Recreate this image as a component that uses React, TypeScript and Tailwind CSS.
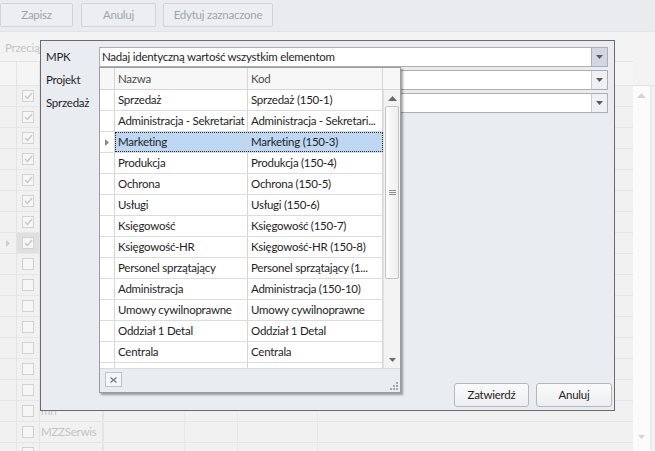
import React from "react";

const items: [string, string][] = [
  ["Sprzedaż", "Sprzedaż (150-1)"],
  ["Administracja - Sekretariat", "Administracja - Sekretari..."],
  ["Marketing", "Marketing (150-3)"],
  ["Produkcja", "Produkcja (150-4)"],
  ["Ochrona", "Ochrona (150-5)"],
  ["Usługi", "Usługi (150-6)"],
  ["Księgowość", "Księgowość (150-7)"],
  ["Księgowość-HR", "Księgowość-HR (150-8)"],
  ["Personel sprzątający", "Personel sprzątający (1..."],
  ["Administracja", "Administracja (150-10)"],
  ["Umowy cywilnoprawne", "Umowy cywilnoprawne"],
  ["Oddział 1 Detal", "Oddział 1 Detal"],
  ["Centrala", "Centrala"],
  ["Oddział 2", "Oddział 2"],
];

const bgRows = Array.from({ length: 18 }, (_, i) => ({
  checked: i < 8,
  selected: i === 7,
  name: i === 15 ? "mn" : i === 16 ? "MZZSerwis" : "",
}));

function DownArrow({ color = "#5b5b5b" }: { color?: string }) {
  return (
    <svg width="7" height="4" viewBox="0 0 7 4">
      <path d="M0 0h7L3.5 4z" fill={color} />
    </svg>
  );
}

function UpArrow({ color = "#5b5b5b" }: { color?: string }) {
  return (
    <svg width="9" height="5" viewBox="0 0 9 5">
      <path d="M0 5h9L4.5 0z" fill={color} />
    </svg>
  );
}

function FadedCheck({ checked }: { checked: boolean }) {
  return (
    <span className="w-[12px] h-[12px] border border-[#d2d2d2] bg-[#f6f6f6] flex items-center justify-center">
      {checked && (
        <svg width="9" height="8" viewBox="0 0 9 8">
          <path d="M1 4l2.5 2.5L8 1" stroke="#c8c8c8" strokeWidth="1.4" fill="none" />
        </svg>
      )}
    </span>
  );
}

function Combo({ text, active }: { text?: string; active?: boolean }) {
  return (
    <div className="w-[509px] h-[20px] flex border border-[#abafb5] bg-white">
      <div className="flex-1 pl-[2px] leading-[18px] text-[#1e1e1e] whitespace-nowrap overflow-hidden">{text}</div>
      <div
        className={
          active
            ? "w-[16px] flex items-center justify-center bg-[#d3d7e4] border-l border-[#abafbd]"
            : "w-[16px] flex items-center justify-center bg-[#eef0f3] border-l border-[#c9ccd1]"
        }
      >
        <DownArrow />
      </div>
    </div>
  );
}

export default function App() {
  return (
    <div className="relative w-[655px] h-[451px] overflow-hidden bg-[#f1f1f1] text-[11.5px] tracking-[-0.25px] font-['Segoe_UI',Lato,sans-serif]">
      {/* toolbar */}
      <div className="h-[32px] bg-[#e9ebee] flex items-start pt-[3px] gap-[8px] border-b border-[#e1e3e6]">
        <button className="w-[73px] h-[24px] border border-[#d0d3d8] rounded-[2px] bg-[#eceef1] text-[#9fa4aa]">Zapisz</button>
        <button className="w-[75px] h-[24px] border border-[#d0d3d8] rounded-[2px] bg-[#eceef1] text-[#9fa4aa]">Anuluj</button>
        <button className="w-[110px] h-[24px] -ml-[1px] border border-[#d0d3d8] rounded-[2px] bg-[#eceef1] text-[#9fa4aa]">Edytuj zaznaczone</button>
      </div>

      {/* background grid */}
      <div className="flex h-[419px]">
        <div className="flex-1 flex flex-col">
          <div className="h-[30px] shrink-0 bg-[#f3f3f3] border-b border-[#e4e4e4] pl-[5px] pt-[7px] text-[#c6c6c6] whitespace-nowrap">
            Przeciągnij nagłówek kolumny tutaj
          </div>
          <div className="h-[24px] shrink-0 flex border-b border-[#e4e4e4] bg-[#f5f5f5]">
            <div className="w-[17px] border-r border-[#e4e4e4]" />
            <div className="w-[23px] border-r border-[#e4e4e4]" />
            <div className="w-[64px] border-r-2 border-[#e4e4e4]" />
            <div className="w-[81px] border-r border-[#e4e4e4]" />
            <div className="w-[53px] border-r border-[#e4e4e4]" />
            <div className="w-[80px] border-r border-[#e4e4e4]" />
          </div>
          {bgRows.map((r, i) => (
            <div key={i} className="h-[21px] shrink-0 flex border-b border-[#e6e6e6]">
              <div className="w-[17px] border-r border-[#e4e4e4] flex items-center justify-center">
                {r.selected && (
                  <svg width="4" height="7" viewBox="0 0 4 7">
                    <path d="M0 0l4 3.5L0 7z" fill="#cfcfcf" />
                  </svg>
                )}
              </div>
              <div
                className={
                  r.selected
                    ? "w-[23px] border-r border-[#e4e4e4] flex items-center justify-center bg-[#e0e0e0]"
                    : "w-[23px] border-r border-[#e4e4e4] flex items-center justify-center"
                }
              >
                <FadedCheck checked={r.checked} />
              </div>
              <div className="w-[64px] border-r-2 border-[#e4e4e4] pl-[1px] leading-[20px] text-[#c4c4c4] whitespace-nowrap overflow-hidden">
                {r.name}
              </div>
              <div className="w-[81px] border-r border-[#e8e8e8]" />
              <div className="w-[53px] border-r border-[#e8e8e8]" />
              <div className="w-[80px] border-r border-[#e8e8e8]" />
            </div>
          ))}
        </div>
        <div className="w-[22px] flex flex-col">
          <div className="h-[54px] shrink-0 border-b border-[#e4e4e4] bg-[#f3f3f3]" />
          <div className="flex-1 flex">
            <div className="w-[18px] bg-[#fbfbfb] border-r border-[#e6e6e6] flex flex-col items-center justify-between pt-[7px] pb-[12px]">
              <UpArrow color="#d3d3d3" />
              <DownArrow color="#d3d3d3" />
            </div>
          </div>
        </div>
      </div>

      {/* dialog */}
      <div className="absolute left-[40px] top-[40px] w-[575px] h-[371px] border border-[#6b6b6b] bg-[#e9ecf0] flex flex-col">
        <div className="flex flex-col gap-[3px] pt-[6px]">
          <div className="flex items-center">
            <div className="w-[58px] pl-[5px] text-[#1e1e1e]">MPK</div>
            <Combo text="Nadaj identyczną wartość wszystkim elementom" active />
          </div>
          <div className="flex items-center">
            <div className="w-[58px] pl-[5px] text-[#1e1e1e]">Projekt</div>
            <Combo />
          </div>
          <div className="flex items-center">
            <div className="w-[58px] pl-[5px] text-[#1e1e1e]">Sprzedaż</div>
            <Combo />
          </div>
        </div>
        <div className="mt-auto flex justify-end gap-[7px] pr-[2px] pb-[3px]">
          <button className="w-[75px] h-[24px] border border-[#b4b8be] rounded-[3px] bg-gradient-to-b from-[#fbfbfc] to-[#eceef1] text-[#1e1e1e]">
            Zatwierdź
          </button>
          <button className="w-[76px] h-[24px] border border-[#b4b8be] rounded-[3px] bg-gradient-to-b from-[#fbfbfc] to-[#eceef1] text-[#1e1e1e]">
            Anuluj
          </button>
        </div>
      </div>

      {/* dropdown popup */}
      <div className="absolute left-[99px] top-[67px] w-[302px] h-[326px] border border-[#9c9c9c] bg-white shadow-[2px_2px_2px_rgba(0,0,0,0.35)] flex flex-col">
        <div className="h-[22px] shrink-0 flex border-b border-[#d5d5d5] bg-[#f7f7f8] text-[#4b4b4b]">
          <div className="w-[15px] border-r border-[#d5d5d5]" />
          <div className="w-[133px] border-r border-[#d5d5d5] pl-[3px] leading-[21px]">Nazwa</div>
          <div className="w-[135px] border-r border-[#d5d5d5] pl-[3px] leading-[21px]">Kod</div>
          <div className="flex-1" />
        </div>
        <div className="h-[278px] shrink-0 flex">
          <div className="w-[283px] overflow-hidden flex flex-col">
            {items.map(([name, code], i) => {
              const sel = i === 2;
              return (
                <div key={i} className="h-[21px] shrink-0 flex border-b border-[#dcdcdc] text-[#1e1e1e]">
                  <div className="w-[15px] border-r border-[#d5d5d5] flex items-center justify-center">
                    {sel && (
                      <svg width="4" height="7" viewBox="0 0 4 7">
                        <path d="M0 0l4 3.5L0 7z" fill="#8a8a8a" />
                      </svg>
                    )}
                  </div>
                  <div
                    className={
                      sel
                        ? "flex bg-[#bed7f2] outline-1 outline-dotted outline-[#2a2a2a] -outline-offset-1"
                        : "flex"
                    }
                  >
                    <div className="w-[133px] border-r border-[#d5d5d5] pl-[3px] leading-[20px] whitespace-nowrap overflow-hidden">
                      {name}
                    </div>
                    <div className="w-[135px] border-r border-[#d5d5d5] pl-[3px] leading-[20px] whitespace-nowrap overflow-hidden">
                      {code}
                    </div>
                  </div>
                </div>
              );
            })}
          </div>
          <div className="flex-1 bg-[#f3f3f3] border-l border-[#e2e2e2] flex flex-col items-center pt-[6px] pb-[6px]">
            <UpArrow color="#6a6a6a" />
            <div className="mt-[5px] w-[14px] h-[173px] border border-[#c4c4c4] rounded-[2px] bg-gradient-to-r from-[#fdfdfd] to-[#eeeeee] flex items-center justify-center">
              <svg width="7" height="5" viewBox="0 0 7 5">
                <path d="M0 0.5h7M0 2.5h7M0 4.5h7" stroke="#8c8c8c" strokeWidth="1" />
              </svg>
            </div>
            <div className="mt-auto">
              <DownArrow color="#6a6a6a" />
            </div>
          </div>
        </div>
        <div className="flex-1 border-t border-[#d8dbe0] bg-[#e9ecf0] flex items-start justify-between pl-[5px] pt-[3px] pr-[2px] pb-[2px]">
          <div className="w-[17px] h-[15px] border border-[#bfc3c9] bg-[#f5f6f8] flex items-center justify-center">
            <svg width="7" height="6" viewBox="0 0 7 6">
              <path d="M0.5 0.5l6 5M6.5 0.5l-6 5" stroke="#7a7a7a" strokeWidth="1.3" />
            </svg>
          </div>
          <svg className="self-end" width="8" height="8" viewBox="0 0 8 8">
            <rect x="6" y="0" width="2" height="2" fill="#a6a6a6" />
            <rect x="3" y="3" width="2" height="2" fill="#a6a6a6" />
            <rect x="6" y="3" width="2" height="2" fill="#a6a6a6" />
            <rect x="0" y="6" width="2" height="2" fill="#a6a6a6" />
            <rect x="3" y="6" width="2" height="2" fill="#a6a6a6" />
            <rect x="6" y="6" width="2" height="2" fill="#a6a6a6" />
          </svg>
        </div>
      </div>
    </div>
  );
}
